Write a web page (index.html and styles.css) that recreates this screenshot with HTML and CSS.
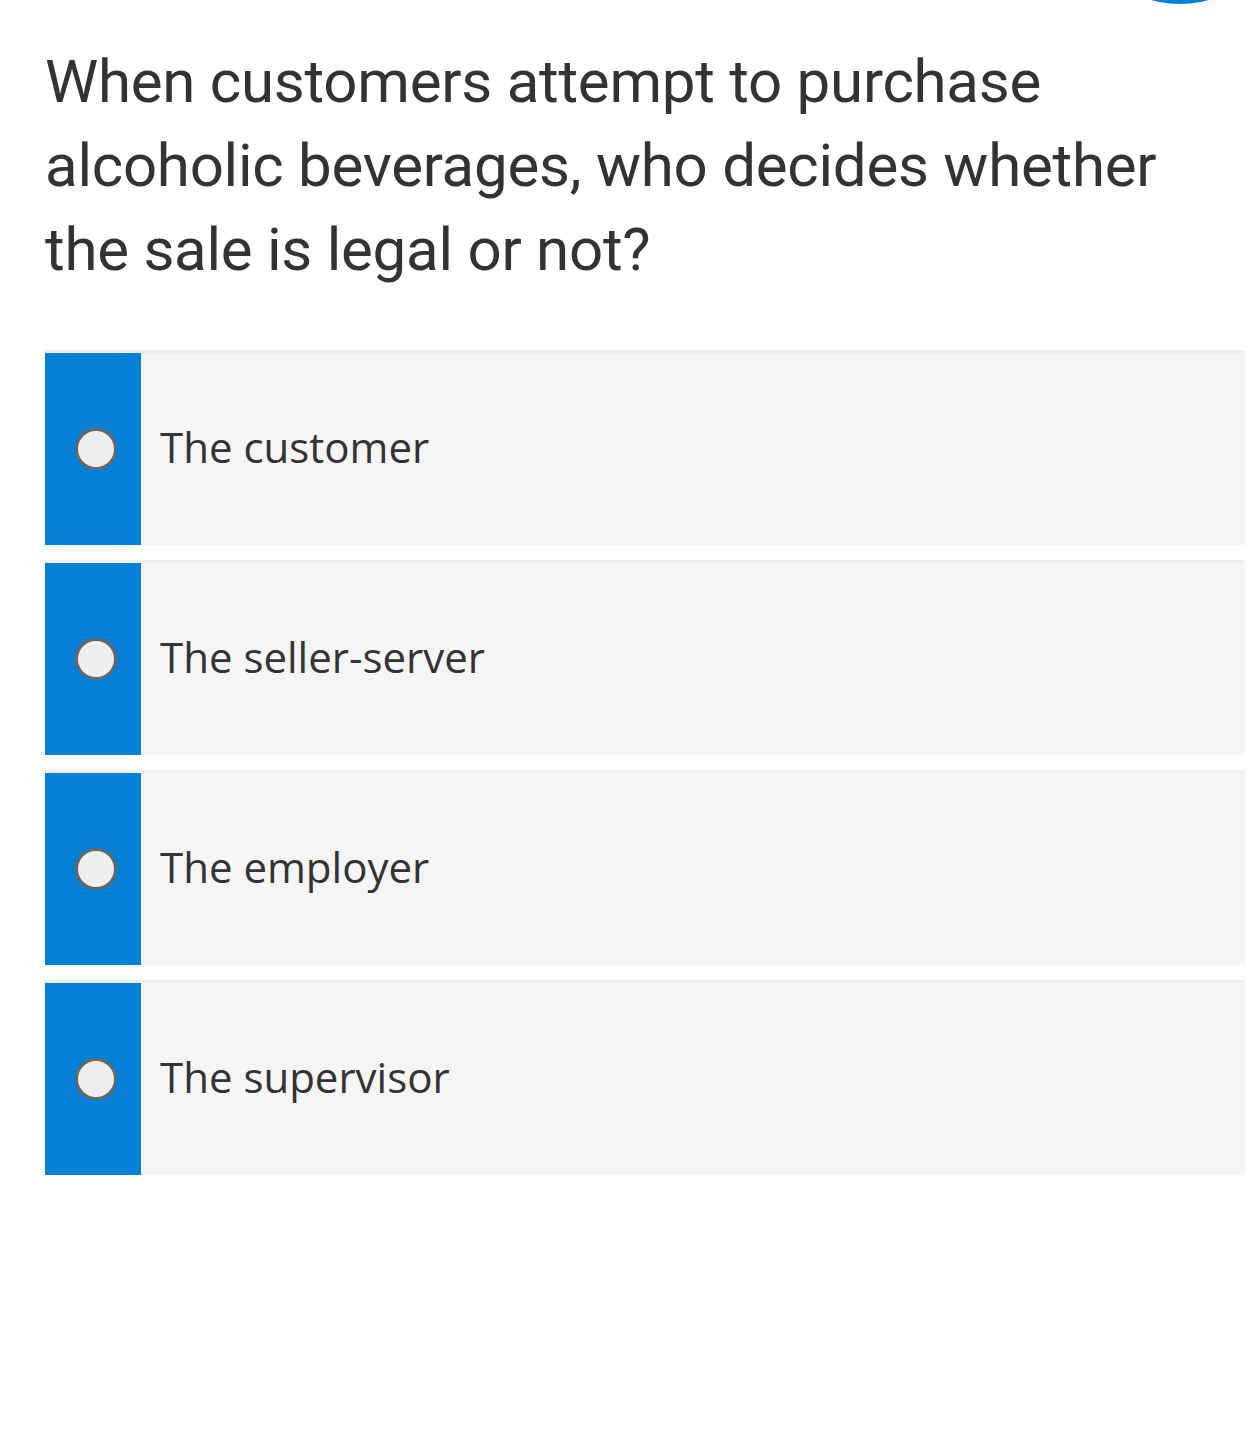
FILE: index.html
```html
<!DOCTYPE html>
<html lang="en">
<head>
    <meta charset="UTF-8">
    <meta name="viewport" content="width=device-width, initial-scale=1.0">
    <title>Quiz question</title>
    <link rel="stylesheet" href="styles.css">
</head>
<body>
    <div class="corner-badge"></div>
    <div class="container">
        <h1 class="question">When customers attempt to purchase alcoholic beverages, who decides whether the sale is legal or not?</h1>
        <div class="answers">
            <!-- Answers -->
            <label class="answer">
                <span class="answer-side"><span class="radio"></span></span>
                <span class="answer-text">The customer</span>
            </label>
            <label class="answer">
                <span class="answer-side"><span class="radio"></span></span>
                <span class="answer-text">The seller-server</span>
            </label>
            <label class="answer">
                <span class="answer-side"><span class="radio"></span></span>
                <span class="answer-text">The employer</span>
            </label>
            <label class="answer">
                <span class="answer-side"><span class="radio"></span></span>
                <span class="answer-text">The supervisor</span>
            </label>
        </div>
    </div>
</body>
</html>
```

FILE: styles.css
```css
body {
    margin: 0;
    background: #fff;
    font-family: 'Roboto', 'Liberation Sans', sans-serif;
    color: #333;
    overflow: hidden;
}

.corner-badge {
    position: absolute;
    left: 1073px;
    top: -210px;
    width: 214px;
    height: 214px;
    border-radius: 50%;
    background: #0580d6;
}

.container {
    padding: 40px 4px 0 45px;
}

.question {
    margin: 0 0 58px;
    font-size: 60px;
    font-weight: 400;
    line-height: 84px;
    letter-spacing: -0.25px;
    color: #333;
    max-width: 1160px;
}

.answers {
    display: flex;
    flex-direction: column;
}

.answer {
    display: flex;
    height: 192px;
    margin-bottom: 15px;
    border-top: 3px solid #eeeeee;
    background: #f5f5f5;
    cursor: pointer;
}

.answer-side {
    display: flex;
    align-items: center;
    justify-content: center;
    width: 96px;
    background: #0580d6;
}

.answer-side .radio {
    width: 36px;
    height: 36px;
    border: 3px solid #666;
    border-radius: 50%;
    background: #eee;
    margin-left: 6px;
}

.answer-text {
    display: flex;
    align-items: center;
    padding: 0 0 6px 19px;
    font-family: 'Open Sans', 'Noto Sans', sans-serif;
    font-size: 42px;
    color: #333;
}
```
